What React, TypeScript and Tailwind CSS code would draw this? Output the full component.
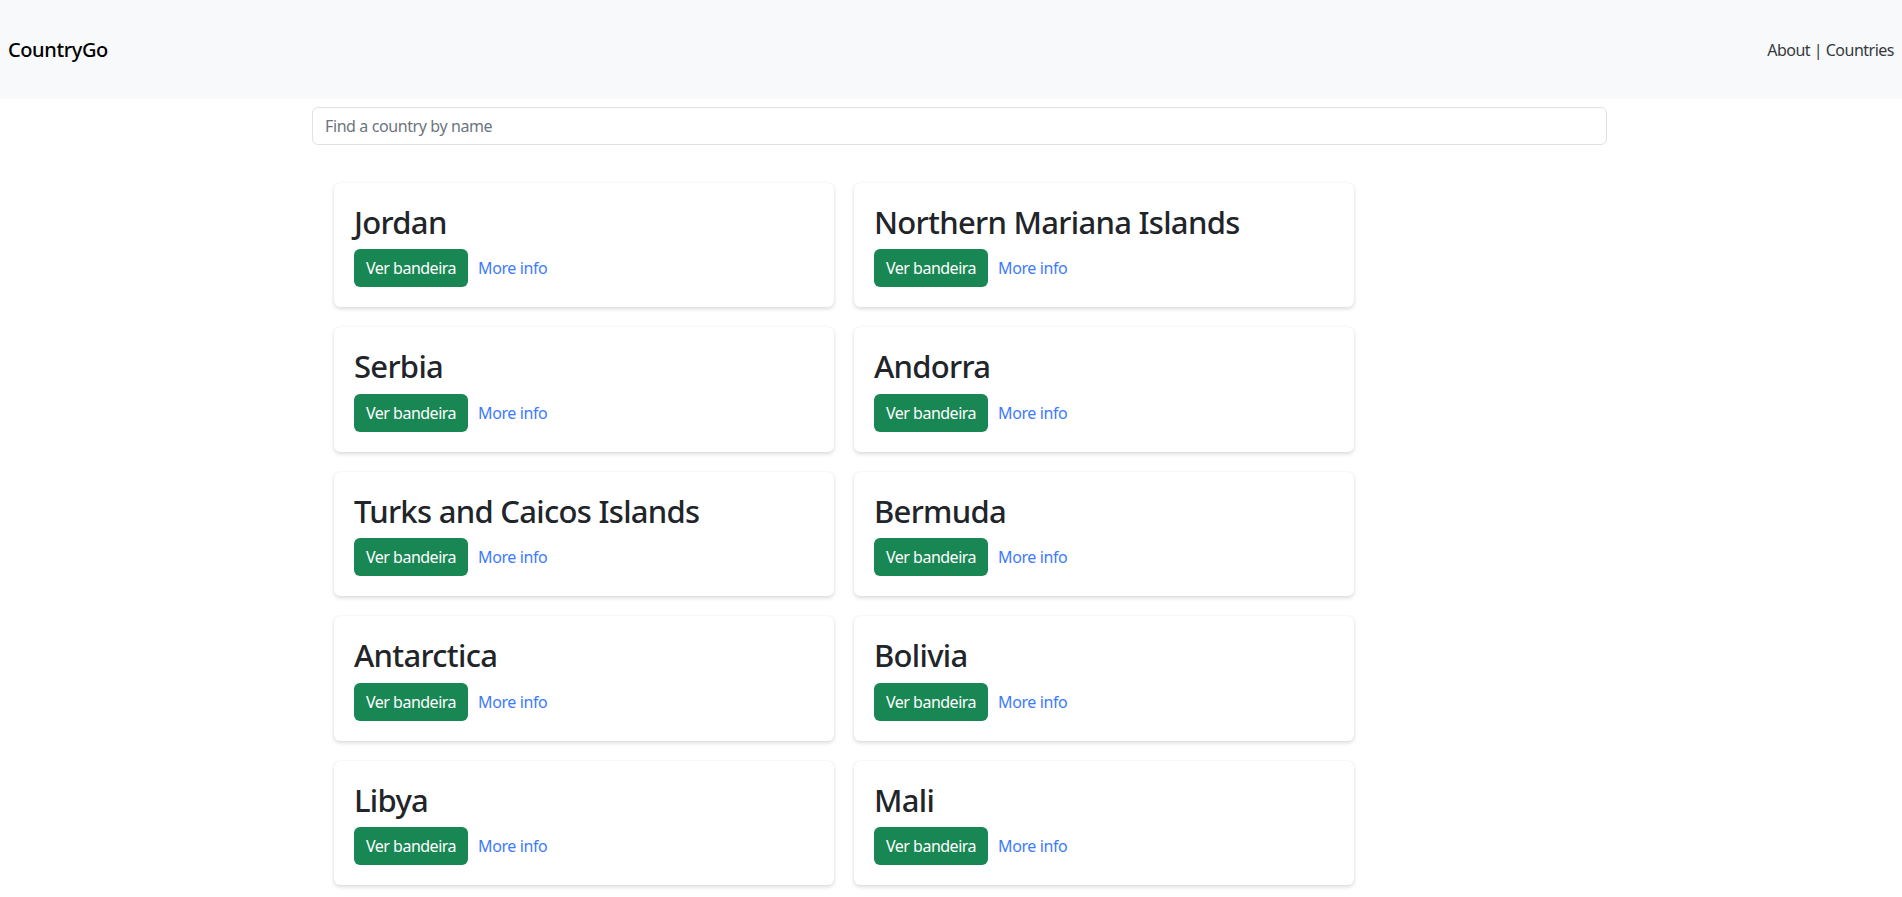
import React from "react";

const countries = [
  "Jordan",
  "Northern Mariana Islands",
  "Serbia",
  "Andorra",
  "Turks and Caicos Islands",
  "Bermuda",
  "Antarctica",
  "Bolivia",
  "Libya",
  "Mali",
];

function CountryCard({ name }: { name: string }) {
  return (
    <div className="w-[500px] rounded-md bg-white p-5 shadow-[0_0_1px_rgba(0,0,0,0.12),0_2px_4px_rgba(0,0,0,0.14)]">
      <h2 className="mb-2 text-[31px] font-medium leading-[38.4px] tracking-[-0.7px] text-[#212529]">{name}</h2>
      <div className="flex items-center">
        <button className="h-[38px] rounded-md bg-[#198754] px-3 text-base tracking-[-0.5px] text-white">
          Ver bandeira
        </button>
        <a href="#" className="ml-[10px] text-base tracking-[-0.4px] text-[#3d7bfd]">
          More info
        </a>
      </div>
    </div>
  );
}

export default function App() {
  return (
    <div className="min-h-screen bg-white font-['Segoe_UI','Noto_Sans',sans-serif] text-[#212529]">
      <nav className="flex h-[99px] items-center justify-between bg-[#f8f9fa] px-2">
        <span className="text-xl font-medium tracking-[-0.4px] text-black">CountryGo</span>
        <span className="text-base tracking-[-0.5px] text-[#343a40]">About | Countries</span>
      </nav>

      <div className="ml-[312px] mt-2 w-[1295px]">
        <input
          type="text"
          placeholder="Find a country by name"
          className="h-[38px] w-full rounded-md border border-[#dee2e6] px-3 text-base tracking-[-0.4px] placeholder:text-[#6c757d] focus:outline-none"
        />
      </div>

      <div className="ml-[334px] mt-[38px] grid w-[1020px] grid-cols-2 gap-5 pb-3">
        {countries.map((c) => (
          <CountryCard key={c} name={c} />
        ))}
      </div>
    </div>
  );
}
